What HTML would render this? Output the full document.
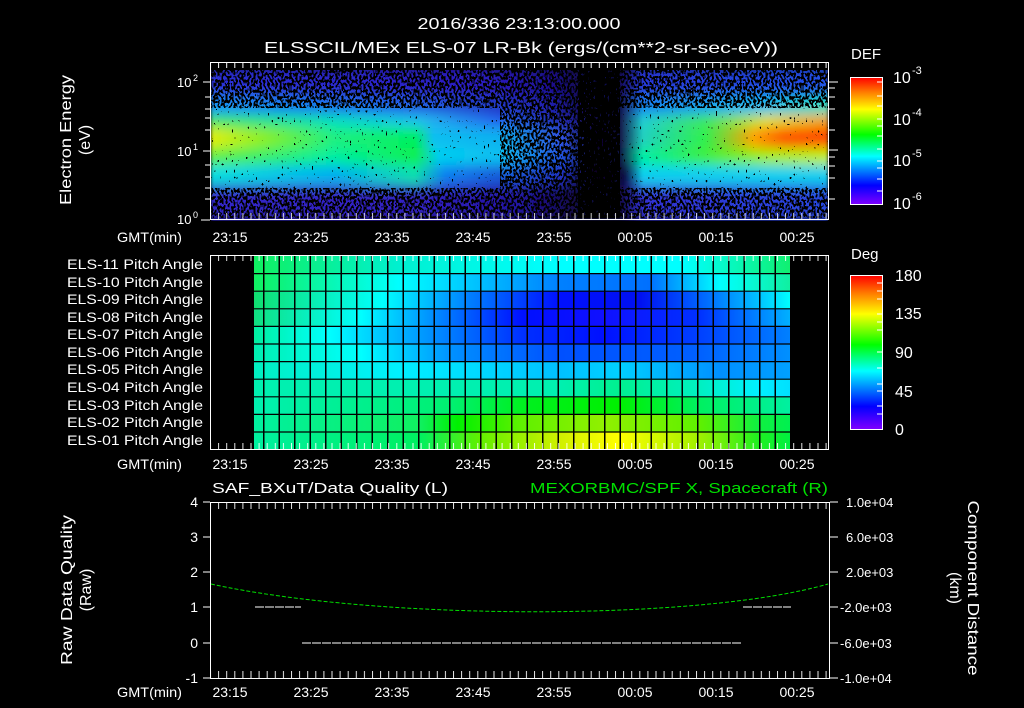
<!DOCTYPE html>
<html><head><meta charset="utf-8"><style>
html,body{margin:0;padding:0;background:#000;width:1024px;height:708px;overflow:hidden}
svg{display:block}
text{font-family:"Liberation Sans",sans-serif;fill:#fff}
</style></head><body>
<svg width="1024" height="708" viewBox="0 0 1024 708" xmlns="http://www.w3.org/2000/svg">
<defs>
<linearGradient id="r1" gradientUnits="userSpaceOnUse" x1="211" x2="828" y1="0" y2="0">
<stop offset="0" stop-color="#2a30d8"/><stop offset=".45" stop-color="#2a1cc0"/><stop offset=".55" stop-color="#1c1090"/><stop offset=".6" stop-color="#100850"/><stop offset=".66" stop-color="#100850"/><stop offset=".7" stop-color="#2838d8"/><stop offset="1" stop-color="#2050e8"/></linearGradient>
<linearGradient id="r2" gradientUnits="userSpaceOnUse" x1="211" x2="828" y1="0" y2="0">
<stop offset="0" stop-color="#1090f8"/><stop offset=".3" stop-color="#2060e8"/><stop offset=".55" stop-color="#2020b0"/><stop offset=".62" stop-color="#100840"/><stop offset=".66" stop-color="#100840"/><stop offset=".7" stop-color="#1880f0"/><stop offset=".9" stop-color="#10c0f0"/><stop offset="1" stop-color="#20e0c0"/></linearGradient>
<linearGradient id="r3" gradientUnits="userSpaceOnUse" x1="211" x2="828" y1="0" y2="0">
<stop offset="0" stop-color="#40e860"/><stop offset=".2" stop-color="#00e0c0"/><stop offset=".34" stop-color="#20c0f0"/><stop offset=".47" stop-color="#2060f0"/><stop offset=".58" stop-color="#2020a0"/><stop offset=".63" stop-color="#100840"/><stop offset=".66" stop-color="#100840"/><stop offset=".7" stop-color="#20d0d0"/><stop offset=".8" stop-color="#40e860"/><stop offset=".9" stop-color="#e0e020"/><stop offset="1" stop-color="#f0a000"/></linearGradient>
<linearGradient id="r4" gradientUnits="userSpaceOnUse" x1="211" x2="828" y1="0" y2="0">
<stop offset="0" stop-color="#e0f000"/><stop offset=".08" stop-color="#90f020"/><stop offset=".2" stop-color="#20f080"/><stop offset=".33" stop-color="#00f060"/><stop offset=".36" stop-color="#10c0f0"/><stop offset=".47" stop-color="#10b0f0"/><stop offset=".57" stop-color="#3050e0"/><stop offset=".62" stop-color="#080530"/><stop offset=".66" stop-color="#100840"/><stop offset=".7" stop-color="#20d0c0"/><stop offset=".8" stop-color="#30f050"/><stop offset=".88" stop-color="#ffa000"/><stop offset=".93" stop-color="#ff5000"/><stop offset="1" stop-color="#ff4000"/></linearGradient>
<linearGradient id="r5" gradientUnits="userSpaceOnUse" x1="211" x2="828" y1="0" y2="0">
<stop offset="0" stop-color="#60f040"/><stop offset=".2" stop-color="#00f0a0"/><stop offset=".33" stop-color="#10f050"/><stop offset=".37" stop-color="#00d0f0"/><stop offset=".47" stop-color="#10c0f0"/><stop offset=".57" stop-color="#2050e0"/><stop offset=".62" stop-color="#100830"/><stop offset=".66" stop-color="#100840"/><stop offset=".7" stop-color="#00f0a0"/><stop offset=".8" stop-color="#40f040"/><stop offset=".9" stop-color="#a0f000"/><stop offset="1" stop-color="#c0f000"/></linearGradient>
<linearGradient id="r6" gradientUnits="userSpaceOnUse" x1="211" x2="828" y1="0" y2="0">
<stop offset="0" stop-color="#00e0e0"/><stop offset=".2" stop-color="#00b0f0"/><stop offset=".33" stop-color="#10e0b0"/><stop offset=".38" stop-color="#1080f0"/><stop offset=".57" stop-color="#2030c0"/><stop offset=".62" stop-color="#080420"/><stop offset=".67" stop-color="#100840"/><stop offset=".7" stop-color="#10d0f0"/><stop offset="1" stop-color="#10d0f0"/></linearGradient>
<linearGradient id="r7" gradientUnits="userSpaceOnUse" x1="211" x2="828" y1="0" y2="0">
<stop offset="0" stop-color="#3028c8"/><stop offset=".35" stop-color="#3020c0"/><stop offset=".5" stop-color="#2214a0"/><stop offset=".6" stop-color="#100840"/><stop offset=".66" stop-color="#100840"/><stop offset=".7" stop-color="#3030d0"/><stop offset="1" stop-color="#2848e0"/></linearGradient>
<linearGradient id="cb" x1="0" y1="1" x2="0" y2="0">
<stop offset="0" stop-color="#8000ff"/><stop offset=".15" stop-color="#0000ff"/><stop offset=".38" stop-color="#00ffff"/><stop offset=".55" stop-color="#00ff00"/><stop offset=".75" stop-color="#ffff00"/><stop offset=".88" stop-color="#ff8000"/><stop offset="1" stop-color="#ff0000"/></linearGradient>
<filter id="bl" x="0" y="0" width="1" height="1"><feGaussianBlur stdDeviation="1.5 6" edgeMode="duplicate"/></filter>
<filter id="nz" x="0" y="0" width="1" height="1" filterUnits="objectBoundingBox">
<feTurbulence type="fractalNoise" baseFrequency="0.5 0.3" numOctaves="1" seed="7"/>
<feColorMatrix type="matrix" values="0 0 0 0 0 0 0 0 0 0 0 0 0 0 0 1 0 0 0 0"/>
<feComponentTransfer><feFuncA type="discrete" tableValues="0 0 0 1 1 1"/></feComponentTransfer>
</filter>
<filter id="nz2" x="0" y="0" width="1" height="1" filterUnits="objectBoundingBox">
<feTurbulence type="fractalNoise" baseFrequency="0.5 0.3" numOctaves="1" seed="11"/>
<feColorMatrix type="matrix" values="0 0 0 0 0 0 0 0 0 0 0 0 0 0 0 1 0 0 0 0"/>
<feComponentTransfer><feFuncA type="discrete" tableValues="0 0 0 0 0 1 1"/></feComponentTransfer>
</filter>
<filter id="nz3" x="0" y="0" width="1" height="1" filterUnits="objectBoundingBox">
<feTurbulence type="fractalNoise" baseFrequency="0.5 0.3" numOctaves="1" seed="5"/>
<feColorMatrix type="matrix" values="0 0 0 0 0 0 0 0 0 0 0 0 0 0 0 1 0 0 0 0"/>
<feComponentTransfer><feFuncA type="discrete" tableValues="0 0 1 1 1 1"/></feComponentTransfer>
</filter>
<linearGradient id="g1" gradientUnits="userSpaceOnUse" x1="254" x2="790"><stop offset="0" stop-color="#10f060"/><stop offset=".27" stop-color="#00f0d0"/><stop offset=".57" stop-color="#00ffff"/><stop offset=".8" stop-color="#00ffff"/><stop offset="1" stop-color="#10f070"/></linearGradient>
<linearGradient id="g2" gradientUnits="userSpaceOnUse" x1="254" x2="790"><stop offset="0" stop-color="#10f060"/><stop offset=".27" stop-color="#00ffff"/><stop offset=".57" stop-color="#0080ff"/><stop offset=".74" stop-color="#0070ff"/><stop offset=".87" stop-color="#00ffff"/><stop offset="1" stop-color="#10f0a0"/></linearGradient>
<linearGradient id="g3" gradientUnits="userSpaceOnUse" x1="254" x2="790"><stop offset="0" stop-color="#10e070"/><stop offset=".24" stop-color="#00ffff"/><stop offset=".4" stop-color="#0080ff"/><stop offset=".57" stop-color="#0010ff"/><stop offset=".72" stop-color="#0010f0"/><stop offset=".83" stop-color="#0060ff"/><stop offset=".94" stop-color="#00c0ff"/><stop offset="1" stop-color="#00ffff"/></linearGradient>
<linearGradient id="g4" gradientUnits="userSpaceOnUse" x1="254" x2="790"><stop offset="0" stop-color="#10e080"/><stop offset=".2" stop-color="#00ffff"/><stop offset=".35" stop-color="#0080ff"/><stop offset=".5" stop-color="#0010ff"/><stop offset=".65" stop-color="#1010ff"/><stop offset=".83" stop-color="#0030ff"/><stop offset="1" stop-color="#00b0ff"/></linearGradient>
<linearGradient id="g5" gradientUnits="userSpaceOnUse" x1="254" x2="790"><stop offset="0" stop-color="#00f0a0"/><stop offset=".14" stop-color="#00ffff"/><stop offset=".33" stop-color="#0090ff"/><stop offset=".5" stop-color="#0030ff"/><stop offset=".65" stop-color="#0010ff"/><stop offset=".83" stop-color="#0040ff"/><stop offset="1" stop-color="#0080ff"/></linearGradient>
<linearGradient id="g6" gradientUnits="userSpaceOnUse" x1="254" x2="790"><stop offset="0" stop-color="#00f0b0"/><stop offset=".2" stop-color="#00ffff"/><stop offset=".37" stop-color="#0090ff"/><stop offset=".57" stop-color="#0050ff"/><stop offset=".83" stop-color="#0060ff"/><stop offset="1" stop-color="#0090ff"/></linearGradient>
<linearGradient id="g7" gradientUnits="userSpaceOnUse" x1="254" x2="790"><stop offset="0" stop-color="#00f0c0"/><stop offset=".27" stop-color="#00f0ff"/><stop offset=".57" stop-color="#00c0ff"/><stop offset=".68" stop-color="#00d0ff"/><stop offset=".87" stop-color="#0090ff"/><stop offset="1" stop-color="#00a0ff"/></linearGradient>
<linearGradient id="g8" gradientUnits="userSpaceOnUse" x1="254" x2="790"><stop offset="0" stop-color="#00f0b0"/><stop offset=".57" stop-color="#00f0b0"/><stop offset=".68" stop-color="#00f090"/><stop offset=".83" stop-color="#00f0c0"/><stop offset=".94" stop-color="#00f0ff"/><stop offset="1" stop-color="#00e0ff"/></linearGradient>
<linearGradient id="g9" gradientUnits="userSpaceOnUse" x1="254" x2="790"><stop offset="0" stop-color="#00f0b0"/><stop offset=".37" stop-color="#00f070"/><stop offset=".5" stop-color="#00f020"/><stop offset=".68" stop-color="#00f000"/><stop offset=".83" stop-color="#00f060"/><stop offset="1" stop-color="#00f0a0"/></linearGradient>
<linearGradient id="g10" gradientUnits="userSpaceOnUse" x1="254" x2="790"><stop offset="0" stop-color="#00f0a0"/><stop offset=".31" stop-color="#10f060"/><stop offset=".38" stop-color="#00f000"/><stop offset=".5" stop-color="#60f000"/><stop offset=".65" stop-color="#90f000"/><stop offset=".83" stop-color="#60f000"/><stop offset=".94" stop-color="#10f040"/><stop offset="1" stop-color="#00f050"/></linearGradient>
<linearGradient id="g11" gradientUnits="userSpaceOnUse" x1="254" x2="790"><stop offset="0" stop-color="#00f0a0"/><stop offset=".31" stop-color="#00f060"/><stop offset=".42" stop-color="#60f000"/><stop offset=".57" stop-color="#d0f000"/><stop offset=".68" stop-color="#ffff00"/><stop offset=".83" stop-color="#a0f000"/><stop offset=".94" stop-color="#20f020"/><stop offset="1" stop-color="#00f040"/></linearGradient>
<pattern id="vgrid" patternUnits="userSpaceOnUse" x="263" y="0" width="15.5" height="10"><rect x="0" y="0" width="1.5" height="10" fill="#000"/></pattern>
<pattern id="tk8" patternUnits="userSpaceOnUse" x="210" y="0" width="8.1" height="10"><rect x="0" y="0" width="1" height="10" fill="#fff"/></pattern>
</defs>

<text x="519" y="29" font-size="16" text-anchor="middle" textLength="203" lengthAdjust="spacingAndGlyphs">2016/336 23:13:00.000</text>
<text x="521" y="53" font-size="16" text-anchor="middle" textLength="514" lengthAdjust="spacingAndGlyphs">ELSSCIL/MEx ELS-07 LR-Bk  (ergs/(cm**2-sr-sec-eV))</text>

<g filter="url(#bl)">
<rect x="211" y="66" width="617" height="30" fill="url(#r1)"/>
<rect x="211" y="96" width="617" height="18" fill="url(#r2)"/>
<rect x="211" y="114" width="617" height="14" fill="url(#r3)"/>
<rect x="211" y="128" width="617" height="20" fill="url(#r4)"/>
<rect x="211" y="148" width="617" height="17" fill="url(#r5)"/>
<rect x="211" y="165" width="617" height="20" fill="url(#r6)"/>
<rect x="211" y="185" width="617" height="36" fill="url(#r7)"/>
</g>
<rect x="211" y="70" width="617" height="38" filter="url(#nz)"/>
<rect x="211" y="188" width="617" height="30" filter="url(#nz)"/>
<rect x="211" y="108" width="617" height="80" filter="url(#nz2)"/>
<rect x="500" y="70" width="80" height="148" filter="url(#nz)"/>
<rect x="578" y="70" width="42" height="148" filter="url(#nz3)"/>
<rect x="211" y="63" width="617" height="7" fill="#000"/>
<rect x="210.5" y="62.5" width="618" height="157" fill="none" stroke="#fff"/>
<rect x="211" y="63" width="617" height="5" fill="url(#tk8)"/>
<rect x="211" y="213" width="617" height="6" fill="url(#tk8)" opacity=".8"/>
<g stroke="#fff">
<line x1="203" y1="82" x2="210" y2="82"/><line x1="205" y1="97" x2="210" y2="97"/><line x1="205" y1="109" x2="210" y2="109"/><line x1="205" y1="118" x2="210" y2="118"/><line x1="205" y1="130" x2="210" y2="130"/><line x1="203" y1="151" x2="210" y2="151"/><line x1="205" y1="165" x2="210" y2="165"/><line x1="205" y1="177" x2="210" y2="177"/><line x1="205" y1="188" x2="210" y2="188"/><line x1="205" y1="199" x2="210" y2="199"/><line x1="201" y1="220" x2="210" y2="220"/>
<line x1="829" y1="82" x2="838" y2="82"/><line x1="829" y1="88" x2="835" y2="88"/><line x1="829" y1="97" x2="835" y2="97"/><line x1="829" y1="109" x2="835" y2="109"/><line x1="829" y1="130" x2="835" y2="130"/><line x1="829" y1="150" x2="838" y2="150"/><line x1="829" y1="157" x2="835" y2="157"/><line x1="829" y1="166" x2="835" y2="166"/><line x1="829" y1="178" x2="835" y2="178"/><line x1="829" y1="199" x2="835" y2="199"/>
</g>
<text x="177" y="87" font-size="13">10</text><text x="193" y="81" font-size="9">2</text>
<text x="177" y="156" font-size="13">10</text><text x="193" y="150" font-size="9">1</text>
<text x="177" y="224" font-size="13">10</text><text x="193" y="218" font-size="9">0</text>
<text transform="translate(71,140) rotate(-90)" font-size="16" text-anchor="middle" textLength="130" lengthAdjust="spacingAndGlyphs">Electron Energy</text>
<text transform="translate(90,140) rotate(-90)" font-size="16" text-anchor="middle">(eV)</text>

<text x="851" y="59" font-size="15">DEF</text>
<rect x="850.5" y="77.5" width="32" height="127" fill="url(#cb)" stroke="#fff"/>
<g stroke="#fff"><line x1="877" y1="82" x2="883" y2="82"/><line x1="877" y1="96" x2="883" y2="96"/><line x1="877" y1="106" x2="883" y2="106"/><line x1="877" y1="119" x2="883" y2="119"/><line x1="877" y1="126" x2="883" y2="126"/><line x1="877" y1="136" x2="883" y2="136"/><line x1="877" y1="149" x2="883" y2="149"/><line x1="877" y1="161" x2="883" y2="161"/><line x1="877" y1="168" x2="883" y2="168"/><line x1="877" y1="179" x2="883" y2="179"/><line x1="877" y1="191" x2="883" y2="191"/></g>
<text x="893" y="83" font-size="16">10</text><text x="912" y="74" font-size="11">-3</text>
<text x="893" y="125" font-size="16">10</text><text x="912" y="116" font-size="11">-4</text>
<text x="893" y="166" font-size="16">10</text><text x="912" y="157" font-size="11">-5</text>
<text x="893" y="209" font-size="16">10</text><text x="912" y="200" font-size="11">-6</text>

<g font-size="14">
<text x="117" y="242" textLength="65" lengthAdjust="spacingAndGlyphs">GMT(min)</text>
<text x="117" y="469" textLength="65" lengthAdjust="spacingAndGlyphs">GMT(min)</text>
<text x="117" y="697" textLength="65" lengthAdjust="spacingAndGlyphs">GMT(min)</text>
</g>
<g font-size="14" text-anchor="middle">
<text x="230" y="242">23:15</text><text x="311" y="242">23:25</text><text x="392" y="242">23:35</text><text x="473" y="242">23:45</text><text x="554" y="242">23:55</text><text x="635" y="242">00:05</text><text x="716" y="242">00:15</text><text x="797" y="242">00:25</text>
<text x="230" y="469">23:15</text><text x="311" y="469">23:25</text><text x="392" y="469">23:35</text><text x="473" y="469">23:45</text><text x="554" y="469">23:55</text><text x="635" y="469">00:05</text><text x="716" y="469">00:15</text><text x="797" y="469">00:25</text>
<text x="230" y="697">23:15</text><text x="311" y="697">23:25</text><text x="392" y="697">23:35</text><text x="473" y="697">23:45</text><text x="554" y="697">23:55</text><text x="635" y="697">00:05</text><text x="716" y="697">00:15</text><text x="797" y="697">00:25</text>
</g>

<rect x="254" y="256" width="536" height="17.6" fill="url(#g1)"/>
<rect x="254" y="273.6" width="536" height="17.6" fill="url(#g2)"/>
<rect x="254" y="291.2" width="536" height="17.6" fill="url(#g3)"/>
<rect x="254" y="308.8" width="536" height="17.6" fill="url(#g4)"/>
<rect x="254" y="326.4" width="536" height="17.6" fill="url(#g5)"/>
<rect x="254" y="344" width="536" height="17.6" fill="url(#g6)"/>
<rect x="254" y="361.6" width="536" height="17.6" fill="url(#g7)"/>
<rect x="254" y="379.2" width="536" height="17.6" fill="url(#g8)"/>
<rect x="254" y="396.8" width="536" height="17.6" fill="url(#g9)"/>
<rect x="254" y="414.4" width="536" height="17.6" fill="url(#g10)"/>
<rect x="254" y="432" width="536" height="17" fill="url(#g11)"/>
<rect x="255" y="256" width="535" height="193" fill="url(#vgrid)"/>
<g stroke="#000" stroke-width="1.2">
<line x1="254" y1="273.6" x2="790" y2="273.6"/><line x1="254" y1="291.2" x2="790" y2="291.2"/><line x1="254" y1="308.8" x2="790" y2="308.8"/><line x1="254" y1="326.4" x2="790" y2="326.4"/><line x1="254" y1="344" x2="790" y2="344"/><line x1="254" y1="361.6" x2="790" y2="361.6"/><line x1="254" y1="379.2" x2="790" y2="379.2"/><line x1="254" y1="396.8" x2="790" y2="396.8"/><line x1="254" y1="414.4" x2="790" y2="414.4"/><line x1="254" y1="432" x2="790" y2="432"/>
</g>
<rect x="210.5" y="255.5" width="618" height="194" fill="none" stroke="#fff"/>
<rect x="211" y="256" width="617" height="5" fill="url(#tk8)" opacity=".9"/>
<rect x="211" y="443" width="617" height="6" fill="url(#tk8)" opacity=".9"/>
<g font-size="14">
<text x="67" y="269" textLength="136" lengthAdjust="spacingAndGlyphs">ELS-11 Pitch Angle</text>
<text x="67" y="287" textLength="136" lengthAdjust="spacingAndGlyphs">ELS-10 Pitch Angle</text>
<text x="67" y="304" textLength="136" lengthAdjust="spacingAndGlyphs">ELS-09 Pitch Angle</text>
<text x="67" y="322" textLength="136" lengthAdjust="spacingAndGlyphs">ELS-08 Pitch Angle</text>
<text x="67" y="339" textLength="136" lengthAdjust="spacingAndGlyphs">ELS-07 Pitch Angle</text>
<text x="67" y="357" textLength="136" lengthAdjust="spacingAndGlyphs">ELS-06 Pitch Angle</text>
<text x="67" y="374" textLength="136" lengthAdjust="spacingAndGlyphs">ELS-05 Pitch Angle</text>
<text x="67" y="392" textLength="136" lengthAdjust="spacingAndGlyphs">ELS-04 Pitch Angle</text>
<text x="67" y="410" textLength="136" lengthAdjust="spacingAndGlyphs">ELS-03 Pitch Angle</text>
<text x="67" y="427" textLength="136" lengthAdjust="spacingAndGlyphs">ELS-02 Pitch Angle</text>
<text x="67" y="445" textLength="136" lengthAdjust="spacingAndGlyphs">ELS-01 Pitch Angle</text>
</g>

<text x="851" y="259" font-size="15">Deg</text>
<rect x="850.5" y="275.5" width="32" height="154" fill="url(#cb)" stroke="#fff"/>
<g stroke="#fff"><line x1="877" y1="283" x2="883" y2="283"/><line x1="877" y1="291" x2="883" y2="291"/><line x1="877" y1="299" x2="883" y2="299"/><line x1="877" y1="314" x2="883" y2="314"/><line x1="877" y1="322" x2="883" y2="322"/><line x1="877" y1="330" x2="883" y2="330"/><line x1="877" y1="352" x2="883" y2="352"/><line x1="877" y1="368" x2="883" y2="368"/><line x1="877" y1="384" x2="883" y2="384"/><line x1="877" y1="391" x2="883" y2="391"/><line x1="877" y1="406" x2="883" y2="406"/><line x1="877" y1="414" x2="883" y2="414"/></g>
<g font-size="16"><text x="895" y="281">180</text><text x="895" y="319">135</text><text x="895" y="358">90</text><text x="895" y="397">45</text><text x="895" y="435">0</text></g>

<text x="212" y="493" font-size="15" textLength="236" lengthAdjust="spacingAndGlyphs">SAF_BXuT/Data Quality (L)</text>
<text x="530" y="493" font-size="15" style="fill:#00e000" textLength="298" lengthAdjust="spacingAndGlyphs">MEXORBMC/SPF X, Spacecraft (R)</text>
<rect x="210.5" y="502.5" width="619" height="176" fill="none" stroke="#fff"/>
<rect x="211" y="503" width="618" height="6" fill="url(#tk8)" opacity=".9"/>
<rect x="211" y="671" width="618" height="7" fill="url(#tk8)" opacity=".9"/>
<g stroke="#fff">
<line x1="203" y1="502" x2="210" y2="502"/><line x1="203" y1="537" x2="210" y2="537"/><line x1="203" y1="572" x2="210" y2="572"/><line x1="203" y1="607" x2="210" y2="607"/><line x1="203" y1="643" x2="210" y2="643"/><line x1="203" y1="678" x2="210" y2="678"/>
<line x1="830" y1="502" x2="838" y2="502"/><line x1="830" y1="537" x2="838" y2="537"/><line x1="830" y1="572" x2="838" y2="572"/><line x1="830" y1="607" x2="838" y2="607"/><line x1="830" y1="643" x2="838" y2="643"/><line x1="830" y1="678" x2="838" y2="678"/>
</g>
<g font-size="14" text-anchor="end"><text x="198" y="507">4</text><text x="198" y="542">3</text><text x="198" y="577">2</text><text x="198" y="612">1</text><text x="198" y="648">0</text><text x="198" y="683">-1</text></g>
<g font-size="13"><text x="846" y="507">1.0e+04</text><text x="846" y="542">6.0e+03</text><text x="846" y="577">2.0e+03</text><text x="840" y="612">-2.0e+03</text><text x="840" y="648">-6.0e+03</text><text x="840" y="683">-1.0e+04</text></g>
<text transform="translate(72,590) rotate(-90)" font-size="16" text-anchor="middle" textLength="150" lengthAdjust="spacingAndGlyphs">Raw Data Quality</text>
<text transform="translate(91,590) rotate(-90)" font-size="16" text-anchor="middle">(Raw)</text>
<text transform="translate(968,588) rotate(90)" font-size="16" text-anchor="middle" textLength="175" lengthAdjust="spacingAndGlyphs">Component Distance</text>
<text transform="translate(950,588) rotate(90)" font-size="16" text-anchor="middle">(km)</text>
<path d="M211,584 C380,621 700,621 828,584" fill="none" stroke="#00e000" stroke-width="1" stroke-dasharray="4 2"/>
<g stroke="#fff" stroke-width="1" stroke-dasharray="9 1">
<line x1="255" y1="607" x2="301" y2="607"/><line x1="743" y1="607" x2="791" y2="607"/><line x1="302" y1="643" x2="741" y2="643"/>
</g>
</svg>
</body></html>
